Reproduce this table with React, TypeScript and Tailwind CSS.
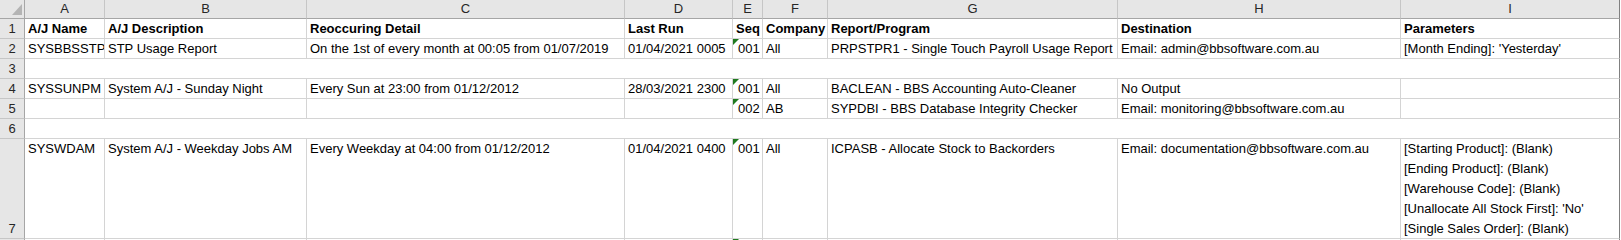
import React from 'react'

const cols = ['A', 'B', 'C', 'D', 'E', 'F', 'G', 'H', 'I']

type Row = {
  n: number
  cells?: string[][]
  blank?: boolean
  tri?: boolean
}

const rows: Row[] = [
  {
    n: 1,
    cells: [['A/J Name'], ['A/J Description'], ['Reoccuring Detail'], ['Last Run'], ['Seq'], ['Company'], ['Report/Program'], ['Destination'], ['Parameters']],
  },
  {
    n: 2,
    tri: true,
    cells: [
      ['SYSBBSSTP'],
      ['STP Usage Report'],
      ['On the 1st of every month at 00:05 from 01/07/2019'],
      ['01/04/2021 0005'],
      ['001'],
      ['All'],
      ['PRPSTPR1 - Single Touch Payroll Usage Report'],
      ['Email: admin@bbsoftware.com.au'],
      ["[Month Ending]: 'Yesterday'"],
    ],
  },
  { n: 3, blank: true },
  {
    n: 4,
    tri: true,
    cells: [
      ['SYSSUNPM'],
      ['System A/J - Sunday Night'],
      ['Every Sun at 23:00 from 01/12/2012'],
      ['28/03/2021 2300'],
      ['001'],
      ['All'],
      ['BACLEAN - BBS Accounting Auto-Cleaner'],
      ['No Output'],
      [''],
    ],
  },
  {
    n: 5,
    tri: true,
    cells: [[''], [''], [''], [''], ['002'], ['AB'], ['SYPDBI - BBS Database Integrity Checker'], ['Email: monitoring@bbsoftware.com.au'], ['']],
  },
  { n: 6, blank: true },
  {
    n: 7,
    tri: true,
    cells: [
      ['SYSWDAM'],
      ['System A/J - Weekday Jobs AM'],
      ['Every Weekday at 04:00 from 01/12/2012'],
      ['01/04/2021 0400'],
      ['001'],
      ['All'],
      ['ICPASB - Allocate Stock to Backorders'],
      ['Email: documentation@bbsoftware.com.au'],
      [
        '[Starting Product]: (Blank)',
        '[Ending Product]: (Blank)',
        '[Warehouse Code]: (Blank)',
        "[Unallocate All Stock First]: 'No'",
        '[Single Sales Order]: (Blank)',
      ],
    ],
  },
  { n: 8, tri: true, cells: [[''], [''], [''], [''], [''], [''], [''], [''], ['']] },
]

function Triangle() {
  return <span className="absolute left-0 top-0 h-0 w-0 border-l-[6px] border-b-[6px] border-l-[#1f7a1f] border-b-transparent" />
}

export default function App() {
  return (
    <div
      className="h-[240px] w-[1621px] overflow-hidden bg-white text-[13px] text-black"
      style={{ fontFamily: '"Liberation Sans", Arial, sans-serif' }}
    >
      <div className="grid grid-cols-[25px_80px_202px_318px_108px_30px_65px_290px_283px_219px_2px] grid-rows-[19px_20px_20px_20px_20px_20px_20px_100px_20px]">
        {/* corner */}
        <div className="relative border-r border-b border-r-[#a6a6a6] border-b-[#a6a6a6] bg-[#e6e6e6]">
          <svg className="absolute left-0 top-0" width="24" height="18" viewBox="0 0 24 18">
            <polygon points="12,15 22,4 22,15" fill="#b4b4b4" />
          </svg>
        </div>
        {cols.map((c) => (
          <div
            key={c}
            className={`flex items-center justify-center border-b border-b-[#a6a6a6] bg-[#e6e6e6] text-[#262626] ${
              c === 'I' ? 'border-r border-r-[#808080]' : 'border-r border-r-[#c6c6c6]'
            }`}
          >
            {c}
          </div>
        ))}
        <div className="bg-white" />

        {rows.map((r) => (
          <React.Fragment key={r.n}>
            <div className="flex items-end justify-center border-r border-b border-r-[#a6a6a6] border-b-[#c6c6c6] bg-[#e6e6e6] leading-[19px] text-[#262626]">
              {r.n}
            </div>
            {cols.map((c, i) => {
              const lines = r.cells ? r.cells[i] : ['']
              const last = c === 'I'
              const edge = last ? 'border-r border-r-[#808080]' : r.blank ? '' : 'border-r border-r-[#d4d4d4]'
              return (
                <div
                  key={c}
                  className={`relative overflow-hidden whitespace-nowrap border-b border-b-[#d4d4d4] leading-[20px] ${edge} ${
                    r.n === 1 ? 'font-bold' : ''
                  } ${c === 'E' ? (r.n === 1 ? 'pl-[3px]' : 'pl-[5px]') : 'pl-[3px]'}`}
                >
                  {c === 'E' && r.tri && <Triangle />}
                  {lines.map((l, k) => (
                    <div key={k} className="h-[20px]">
                      {l}
                    </div>
                  ))}
                </div>
              )
            })}
            <div className="bg-white" />
          </React.Fragment>
        ))}
      </div>
    </div>
  )
}
